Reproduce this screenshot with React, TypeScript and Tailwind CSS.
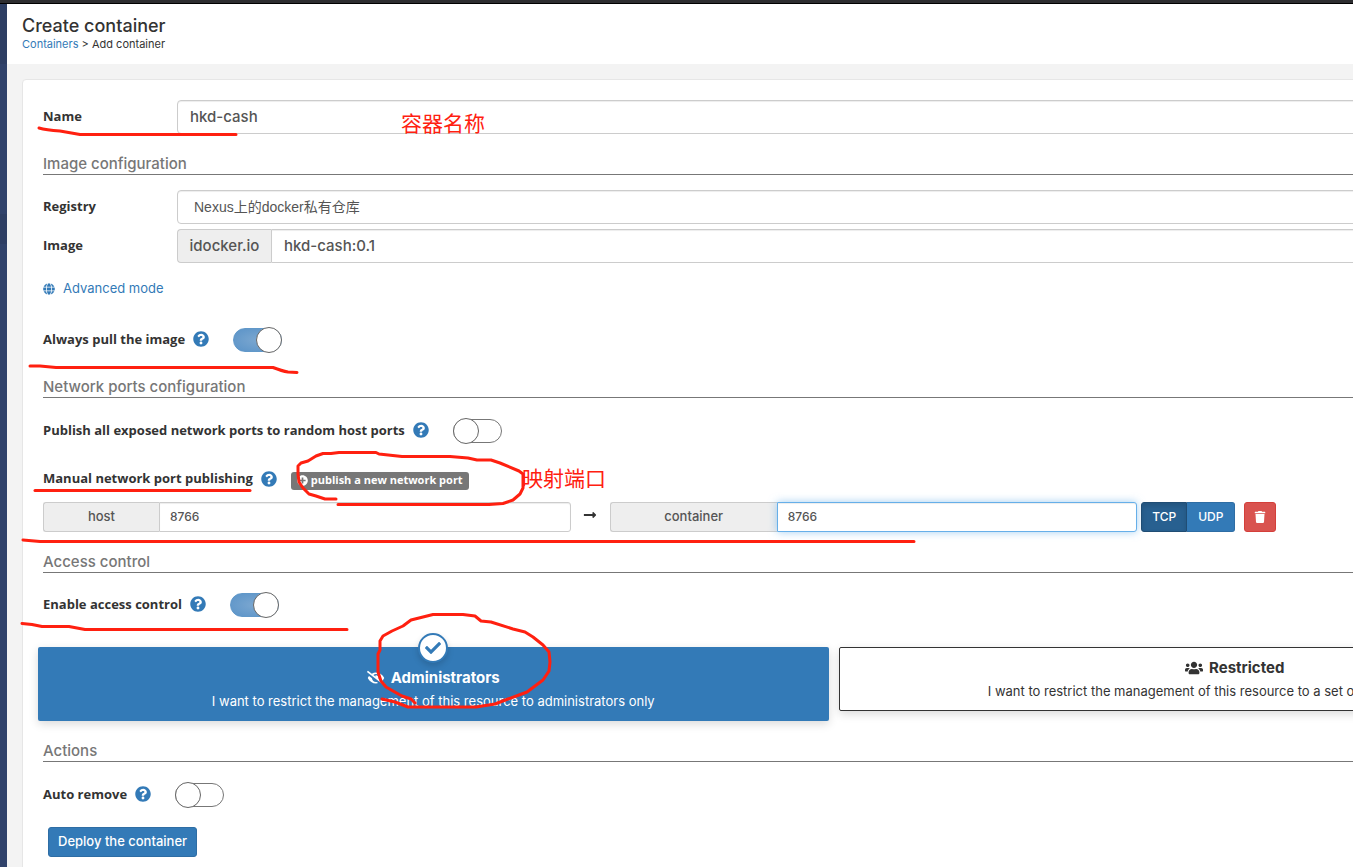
import { useState, type ReactNode } from 'react'
import {
  FaCheck,
  FaEyeSlash,
  FaGlobe,
  FaLongArrowAltRight,
  FaPlusCircle,
  FaQuestionCircle,
  FaTrash,
  FaUsers,
} from 'react-icons/fa'

const inputClass =
  'min-w-0 flex-1 border border-[#ccc] bg-white font-medium text-[#555] shadow-[inset_0_1px_1px_rgba(0,0,0,0.075)] outline-none'

const labelClass = "font-['Open_Sans',sans-serif] text-[13px] font-bold"

function SectionTitle({ children }: { children: ReactNode }) {
  return (
    <h2 className="mt-5 h-[21px] border-b border-[#777] text-[15px] leading-5 font-medium text-[#777]">
      {children}
    </h2>
  )
}

function HelpIcon() {
  return <FaQuestionCircle className="size-4 shrink-0 text-[#337ab7]" />
}

interface ToggleProps {
  id: string
  label: string
  initial?: boolean
}

function ToggleRow({ id, label, initial = false }: ToggleProps) {
  const [on, setOn] = useState(initial)

  return (
    <div className="flex h-[26px] items-start">
      <div className="flex h-[23px] items-center gap-2">
        <label htmlFor={id} className={`${labelClass} leading-5`}>
          {label}
        </label>
        <HelpIcon />
      </div>
      <span className="relative ml-6 flex h-[26px] w-[49px] items-center">
        <input
          id={id}
          type="checkbox"
          checked={on}
          onChange={(e) => setOn(e.target.checked)}
          className="peer h-6 w-full appearance-none rounded-full border border-[#777] bg-white checked:border-[#6198c9] checked:bg-radial checked:from-[#7ba7d0] checked:to-[#5a93c8]"
        />
        <span className="pointer-events-none absolute top-0 left-0 size-[26px] rounded-full border border-[#666] bg-white peer-checked:right-0 peer-checked:left-auto" />
      </span>
    </div>
  )
}

interface PortFieldProps {
  id: string
  label: string
  focused?: boolean
}

function PortField({ id, label, focused }: PortFieldProps) {
  return (
    <div className="flex h-[30px] w-1/3 text-xs">
      <label
        htmlFor={id}
        className={`flex items-center justify-center rounded-l-[3px] border border-r-0 border-[#ccc] bg-[#eee] text-[13px] font-medium text-[#555] ${focused ? 'w-[167px]' : 'w-[116px]'}`}
      >
        {label}
      </label>
      <input
        id={id}
        defaultValue="8766"
        className={
          focused
            ? 'min-w-0 flex-1 rounded-r-[3px] border border-[#66afe9] bg-white px-[10px] font-medium text-[#555] shadow-[inset_0_1px_1px_rgba(0,0,0,0.075),0_0_8px_rgba(102,175,233,0.6)] outline-none'
            : `${inputClass} rounded-r-[3px] px-[10px]`
        }
      />
    </div>
  )
}

// Hand drawn marks and notes over the form
function Annotations() {
  return (
    <div className="pointer-events-none absolute inset-0 z-10 overflow-hidden">
      <svg
        className="absolute top-0 left-0 h-[867px] w-[1353px]"
        viewBox="0 0 1353 867"
        fill="none"
        stroke="#ff2010"
        strokeWidth="3"
        strokeLinecap="round"
        strokeLinejoin="round"
      >
        <path d="M39 128 Q46 130 60 131 L80 134.500 H236" />
        <path d="M30 366 L40 366 L56 367.500 H273 Q282 371 288 372 L297 372.500" />
        <path d="M35 490.500 H250" />
        <path d="M23 540 L40 541.500 H914" />
        <path d="M22 623.500 L32 624.500 L42 626.500 H69 L85 629.500 H347" />
        <path d="M336 499 H325 L316 496 L309 494 L303 488 L299 482 L298 474 V466 L301 463 L308 461 L316 456 L323 453.500 H331 L339 452.500 H376 L379 454 L402 456.500 H450 L468 458 L477 460 H491 L500 463 L519 471 L523 474 V488 L520 494 L513 500 L503 503.500 L489 504.500 H338" />
        <path d="M382 699 L395 702 L408 707 H476 L495 704 L508 699 L527 692 L543 680 L549 671 L550 662 L549 652 L543 645 L533 637 L525 632 L513 629 L491 622 L481 621 L475 616 L463 614.500 H433 L423 617 L411 620 L403 626 L392 631 L383 636 L380 641 V650 L378 654 V672 L381 681 L386 687 L393 691 L402 696 L411 699 L415 703" />
      </svg>
      <span className="absolute top-[107px] left-[401px] font-['Noto_Sans_CJK_SC',sans-serif] text-[21px] leading-[30px] font-normal text-[#ff2010]">
        容器名称
      </span>
      <span className="absolute top-[462px] left-[522px] font-['Noto_Sans_CJK_SC',sans-serif] text-[21px] leading-[30px] font-normal text-[#ff2010]">
        映射端口
      </span>
    </div>
  )
}

export default function App() {
  return (
    <div className="relative min-h-screen overflow-hidden bg-[#f3f3f3] font-[Inter,'Noto_Sans_CJK_SC',sans-serif] text-[#333]">
      <div className="h-1 border-b border-black bg-[#2d2d30]" />
      <div className="flex">
        <aside className="flex w-[7px] shrink-0 flex-col bg-[#30426a]">
          <div className="h-[60px] bg-[#2d3e63]" />
          <div className="mt-[150px] h-[30px] bg-[#2d3e63]" />
        </aside>

        {/* the form is laid out for wide screens, the rest runs off to the right */}
        <main className="min-w-[1655px] flex-1">
          <header className="h-[60px] bg-white px-[15px] pt-3">
            <h1 className="text-lg leading-5 font-medium">Create container</h1>
            <nav className="text-[11px] leading-4">
              <a href="#containers" className="text-[#337ab7]">
                Containers
              </a>{' '}
              &gt; Add container
            </nav>
          </header>

          <form
            className="mx-[15px] mt-[15px] rounded-sm border border-[#e6e6e6] bg-white px-5 pt-5 pb-5"
            onSubmit={(e) => e.preventDefault()}
          >
            <div className="flex h-[34px]">
              <label htmlFor="name" className={`${labelClass} w-[134px] shrink-0 leading-8`}>
                Name
              </label>
              <input
                id="name"
                defaultValue="hkd-cash"
                className={`${inputClass} rounded px-3 text-[15px]`}
              />
            </div>

            <SectionTitle>Image configuration</SectionTitle>
            <div className="mt-[15px] flex h-[34px]">
              <label htmlFor="registry" className={`${labelClass} w-[134px] shrink-0 leading-8`}>
                Registry
              </label>
              <select
                id="registry"
                className="min-w-0 flex-1 appearance-none rounded border border-[#ccc] bg-white px-4 font-['Liberation_Sans','Noto_Sans_CJK_SC',sans-serif] text-sm text-[#555] shadow-[inset_0_1px_1px_rgba(0,0,0,0.075)]"
              >
                <option>Nexus上的docker私有仓库</option>
              </select>
            </div>
            <div className="mt-[5px] flex h-[34px]">
              <label htmlFor="image" className={`${labelClass} w-[134px] shrink-0 leading-8`}>
                Image
              </label>
              <span className="flex w-[94px] items-center justify-center rounded-l border border-r-0 border-[#ccc] bg-[#eee] text-[15px] font-medium text-[#555]">
                idocker.io
              </span>
              <input
                id="image"
                defaultValue="hkd-cash:0.1"
                className={`${inputClass} rounded-r px-3 text-[15px]`}
              />
            </div>
            <a
              href="#advanced"
              className="mt-4 flex h-5 w-fit items-center gap-2 text-[13px] text-[#337ab7]"
            >
              <FaGlobe className="size-3" />
              Advanced mode
            </a>
            <div className="mt-7 mb-6">
              <ToggleRow id="pull" label="Always pull the image" initial />
            </div>

            <SectionTitle>Network ports configuration</SectionTitle>
            <div className="mt-5">
              <ToggleRow id="publish-all" label="Publish all exposed network ports to random host ports" />
            </div>
            <div className="mt-[25px] flex h-5 items-center">
              <span className={`${labelClass} mr-2`}>Manual network port publishing</span>
              <HelpIcon />
              <button
                type="button"
                className="mt-[3px] ml-[14px] flex h-[18px] items-center gap-[3px] rounded-[3px] bg-[#777] px-[6px] font-['Open_Sans',sans-serif] text-[11px] font-bold text-white"
              >
                <FaPlusCircle className="size-[11px]" />
                publish a new network port
              </button>
            </div>
            <div className="mt-[13px] flex">
              <PortField id="host-port" label="host" />
              <span className="flex h-[26px] w-[39px] items-center justify-center">
                <FaLongArrowAltRight className="size-[14px]" />
              </span>
              <PortField id="container-port" label="container" focused />
              <div className="ml-1 flex text-xs font-medium text-white">
                <button
                  type="button"
                  className="w-[46px] rounded-l-[3px] border border-[#204d74] bg-[#286090] shadow-[inset_0_3px_5px_rgba(0,0,0,0.125)]"
                >
                  TCP
                </button>
                <button
                  type="button"
                  className="w-12 rounded-r-[3px] border border-l-0 border-[#2e6da4] bg-[#337ab7]"
                >
                  UDP
                </button>
              </div>
              <button
                type="button"
                aria-label="Remove port"
                className="ml-[9px] flex w-8 items-center justify-center rounded-[3px] border border-[#d43f3a] bg-[#d9534f] text-white"
              >
                <FaTrash className="size-3" />
              </button>
            </div>

            <SectionTitle>Access control</SectionTitle>
            <div className="mt-[19px]">
              <ToggleRow id="access" label="Enable access control" initial />
            </div>
            <div className="-mx-[5px] mt-[29px] flex items-start gap-[10px] text-center">
              <button
                type="button"
                className="relative flex h-[74px] flex-1 flex-col items-center rounded-xs bg-[#337ab7] pt-5 text-white shadow-[0_3px_10px_rgba(0,0,0,0.15)]"
              >
                <span className="absolute -top-[14px] left-1/2 flex size-[30px] -translate-x-1/2 items-center justify-center rounded-full border-2 border-[#337ab7] bg-white text-[#337ab7] shadow-[0_3px_6px_rgba(0,0,0,0.15)]">
                  <FaCheck className="size-4" />
                </span>
                <span className="flex items-center justify-center gap-[6px] text-[15px] leading-[22px] font-bold">
                  <FaEyeSlash className="size-[18px]" />
                  Administrators
                </span>
                <span className="text-[13px] leading-6">
                  I want to restrict the management of this resource to administrators only
                </span>
              </button>
              <button
                type="button"
                className="flex h-16 flex-1 flex-col items-center rounded-xs border border-[#333] bg-white pt-[9px] shadow-[0_3px_10px_rgba(0,0,0,0.15)]"
              >
                <span className="flex items-center justify-center gap-[6px] text-[15px] leading-[22px] font-bold">
                  <FaUsers className="size-[18px]" />
                  Restricted
                </span>
                <span className="text-[13px] leading-6">
                  I want to restrict the management of this resource to a set of users and/or teams
                </span>
              </button>
            </div>

            <SectionTitle>Actions</SectionTitle>
            <div className="mt-5">
              <ToggleRow id="auto-remove" label="Auto remove" />
            </div>
            <button
              type="submit"
              className="mt-[19px] ml-[5px] h-[30px] rounded-[3px] border border-[#2e6da4] bg-[#337ab7] px-[9px] text-[13px] font-medium text-white"
            >
              Deploy the container
            </button>
          </form>
        </main>
      </div>
      <Annotations />
    </div>
  )
}
